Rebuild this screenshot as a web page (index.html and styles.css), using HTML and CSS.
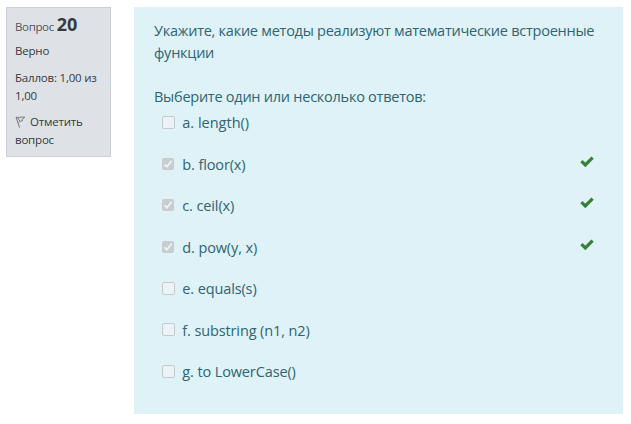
FILE: index.html
```
<!DOCTYPE html>
<html lang="ru">
<head>
<meta charset="utf-8">
<title>Вопрос 20</title>
<link rel="stylesheet" href="styles.css">
</head>
<body>
<main class="question">
  <aside class="info">
    <h3 class="number"><span class="label">Вопрос</span> <b>20</b></h3>
    <div class="state">Верно</div>
    <div class="grade"><span class="marks">Баллов: 1,00 из</span> 1,00</div>
    <div class="flag"><svg class="flag-icon" viewBox="0 0 11 14"><path d="M1 2 4.6 12.6M1 2.2C3.5 3 5.5 1.6 9.8 2.2L7.2 4.4 7.4 6C6 5.8 5 6.6 3.6 7.4M2.8 2.8 5 6.4" /></svg><span>Отметить</span><br>вопрос</div>
  </aside>
  <section class="content">
    <p class="text"><span class="line-one">Укажите, какие методы реализуют математические встроенные</span> <span class="line-two">функции</span></p>
    <p class="prompt"><span>Выберите один или несколько ответов:</span></p>
    <div class="answers">
      <div class="row"><span class="box"></span><span class="answer a">a. length()</span></div>
      <div class="row"><span class="box checked"><svg viewBox="0 0 12 12"><path d="M2.5 6.3 4.9 8.7 9.6 2.8"/></svg></span><span class="answer">b. floor(x)</span><svg class="tick" viewBox="0 0 14 11"><path d="M1.4 5.2 5.3 9 12.6 1.7"/></svg></div>
      <div class="row"><span class="box checked"><svg viewBox="0 0 12 12"><path d="M2.5 6.3 4.9 8.7 9.6 2.8"/></svg></span><span class="answer">c. ceil(x)</span><svg class="tick" viewBox="0 0 14 11"><path d="M1.4 5.2 5.3 9 12.6 1.7"/></svg></div>
      <div class="row"><span class="box checked"><svg viewBox="0 0 12 12"><path d="M2.5 6.3 4.9 8.7 9.6 2.8"/></svg></span><span class="answer">d. pow(y, x)</span><svg class="tick" viewBox="0 0 14 11"><path d="M1.4 5.2 5.3 9 12.6 1.7"/></svg></div>
      <div class="row"><span class="box"></span><span class="answer">e. equals(s)</span></div>
      <div class="row"><span class="box"></span><span class="answer">f. substring (n1, n2)</span></div>
      <div class="row"><span class="box"></span><span class="answer">g. to LowerCase()</span></div>
    </div>
  </section>
</main>
</body>
</html>
```
FILE: styles.css
```
* { box-sizing: border-box; }
body {
  margin: 0;
  background: #fff;
  font-family: "Open Sans", "Noto Sans", sans-serif;
}
p, h3 { margin: 0; }
.question {
  display: flex;
  align-items: flex-start;
  gap: 23px;
  padding: 7px 8px 0 6px;
}
.info {
  flex: none;
  width: 105px;
  height: 150px;
  padding: 6px 0 0 8px;
  border: 1px solid #cad0d7;
  background: #dee2e6;
  color: #343a40;
  font-size: 11.5px;
  letter-spacing: -0.2px;
  line-height: 18px;
  white-space: nowrap;
}
.number { font-size: 11.5px; font-weight: 400; line-height: 21px; }
.number b { font-size: 18px; letter-spacing: 0; }
.label { color: #50565c; letter-spacing: -0.35px; }
.state { margin-top: 5px; }
.grade { width: 92px; margin-top: 9px; white-space: normal; }
.marks { white-space: nowrap; }
.flag { margin-top: 8px; }
.flag-icon { width: 11px; height: 14px; margin-right: 4px; vertical-align: -3px; }
.flag-icon path { fill: none; stroke: #777; stroke-width: 1; }
.content {
  flex: 1;
  min-width: 0;
  height: 407px;
  padding: 13px 20px 0;
  background: #def2f8;
  color: #2f6473;
  font-size: 14.5px;
  letter-spacing: -0.25px;
  line-height: 22px;
}
.text { white-space: nowrap; }
.line-two { display: block; }
.prompt { margin-top: 22px; }
.answers { padding: 0 8px; letter-spacing: -0.12px; }
.answer.a { letter-spacing: 0; }
.row { display: flex; align-items: center; height: 22px; margin: 4px 0 19.5px; }
.row + .row { margin-top: 0; }
.box {
  width: 13px;
  height: 13px;
  margin: -2px 7.3px 0 0;
  border: 1px solid #c5cbcd;
  border-radius: 2px;
  background: #ebf3f6;
}
.checked { width: 12px; height: 12px; margin-right: 8.3px; border: 0; background: #c8cdcf; }
.checked svg { display: block; width: 12px; height: 12px; }
.checked path { fill: none; stroke: #eef5f7; stroke-width: 1.8; }
.tick { width: 14px; height: 11px; margin: -7px 1px 0 auto; }
.tick path { fill: none; stroke: #37803a; stroke-width: 3.2; }
```
